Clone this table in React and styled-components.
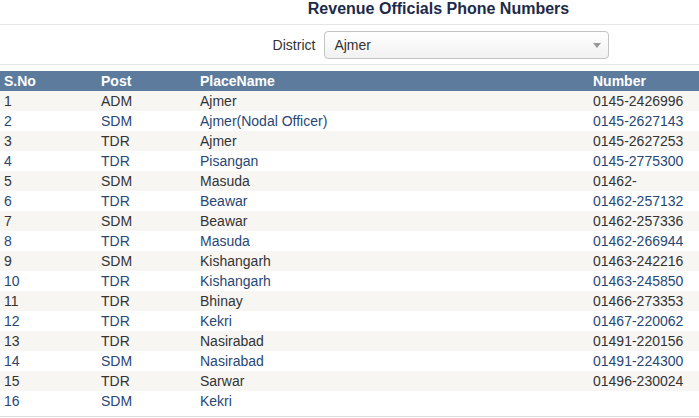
import React from "react";
import styled, { createGlobalStyle } from "styled-components";

const GlobalStyle = createGlobalStyle`
  body {
    margin: 0;
    background: #ffffff;
    font-family: "Liberation Sans", Arial, sans-serif;
  }
`;

const rows = [
  ["1", "ADM", "Ajmer", "0145-2426996"],
  ["2", "SDM", "Ajmer(Nodal Officer)", "0145-2627143"],
  ["3", "TDR", "Ajmer", "0145-2627253"],
  ["4", "TDR", "Pisangan", "0145-2775300"],
  ["5", "SDM", "Masuda", "01462-"],
  ["6", "TDR", "Beawar", "01462-257132"],
  ["7", "SDM", "Beawar", "01462-257336"],
  ["8", "TDR", "Masuda", "01462-266944"],
  ["9", "SDM", "Kishangarh", "01463-242216"],
  ["10", "TDR", "Kishangarh", "01463-245850"],
  ["11", "TDR", "Bhinay", "01466-273353"],
  ["12", "TDR", "Kekri", "01467-220062"],
  ["13", "TDR", "Nasirabad", "01491-220156"],
  ["14", "SDM", "Nasirabad", "01491-224300"],
  ["15", "TDR", "Sarwar", "01496-230024"],
  ["16", "SDM", "Kekri", ""]
];

const Page = styled.div`
  width: 699px;
`;

const TitleBar = styled.div`
  height: 25px;
  border-bottom: 1px solid #e6e6e6;
  padding-left: 178px;
  text-align: center;
  box-sizing: border-box;
`;

const Title = styled.h2`
  margin: 0;
  font-size: 16px;
  line-height: 17px;
  font-weight: bold;
  color: #1d2a48;
`;

const FilterBar = styled.div`
  height: 40px;
  border-bottom: 1px solid #e6e6e6;
  display: flex;
  align-items: center;
  justify-content: center;
  gap: 9px;
  padding-left: 183px;
  padding-top: 1px;
  box-sizing: border-box;
`;

const Label = styled.span`
  font-size: 14px;
  color: #333333;
`;

const Select = styled.div`
  width: 285px;
  height: 28px;
  box-sizing: border-box;
  border: 1px solid #c4c4c4;
  border-radius: 4px;
  background: linear-gradient(#ffffff, #f1f1f1);
  display: flex;
  align-items: center;
  justify-content: space-between;
  padding: 0 7px 0 9px;
  font-size: 14px;
  color: #333333;
`;

const Arrow = styled.span`
  width: 0;
  height: 0;
  border-left: 4px solid transparent;
  border-right: 4px solid transparent;
  border-top: 5px solid #999999;
`;

const Table = styled.table`
  margin-top: 6px;
  width: 699px;
  border-collapse: collapse;
  table-layout: fixed;
  font-size: 14px;
`;

const HeadCell = styled.th`
  background: #5d7b9d;
  color: #ffffff;
  font-weight: bold;
  text-align: left;
  height: 20px;
  padding: 0 4px;
  width: ${(p) => p.$w || "auto"};
`;

const Row = styled.tr`
  background: ${(p) => (p.$alt ? "#ffffff" : "#f7f6f3")};
  color: ${(p) => (p.$alt ? "#284775" : "#333333")};
`;

const Cell = styled.td`
  height: 20px;
  padding: 0 4px;
  white-space: nowrap;
`;

const Footer = styled.div`
  margin-top: 5px;
  border-top: 1px solid #dcdcdc;
`;

export default function App() {
  return (
    <Page>
      <GlobalStyle />
      <TitleBar>
        <Title>Revenue Officials Phone Numbers</Title>
      </TitleBar>
      <FilterBar>
        <Label>District</Label>
        <Select>
          <span>Ajmer</span>
          <Arrow />
        </Select>
      </FilterBar>
      <Table>
        <thead>
          <tr>
            <HeadCell $w="89px">S.No</HeadCell>
            <HeadCell $w="91px">Post</HeadCell>
            <HeadCell $w="385px">PlaceName</HeadCell>
            <HeadCell>Number</HeadCell>
          </tr>
        </thead>
        <tbody>
          {rows.map((r, i) => (
            <Row key={r[0]} $alt={i % 2 === 1}>
              {r.map((c, j) => (
                <Cell key={j}>{c}</Cell>
              ))}
            </Row>
          ))}
        </tbody>
      </Table>
      <Footer />
    </Page>
  );
}
